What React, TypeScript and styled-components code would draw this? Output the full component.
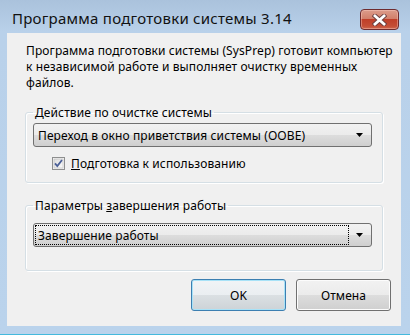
import styled, { createGlobalStyle } from 'styled-components';

const GlobalStyle = createGlobalStyle`
  html, body {
    margin: 0;
    padding: 0;
    background: #b9d1ea;
  }
  body {
    font-family: 'Noto Sans', 'Liberation Sans', sans-serif;
    color: #000;
  }
`;

const Window = styled.div`
  width: 410px;
  height: 335px;
  box-sizing: border-box;
  display: flex;
  flex-direction: column;
  padding: 0 9px 8px 7px;
  background: linear-gradient(#aac2dc 0, #b9d1ea 32px, #bad3ec 100%);
  border-bottom: 1px solid #43b9dd;
`;

const TitleBar = styled.div`
  height: 33px;
  display: flex;
  align-items: flex-start;
  justify-content: space-between;
  padding: 0 2px 0 5px;
`;

const Title = styled.div`
  padding-top: 8px;
  font-size: 15px;
  line-height: 20px;
  letter-spacing: 0.25px;
  color: #111;
  white-space: nowrap;
`;

const CloseButton = styled.div`
  margin-top: 9px;
  width: 37px;
  height: 19px;
  border: 1px solid #6e2c2f;
  border-radius: 4px;
  display: flex;
  align-items: center;
  justify-content: center;
  background: linear-gradient(#dc9c8b 0%, #d2806b 45%, #c03f29 50%, #c44e36 85%, #cf6a50 100%);
  box-shadow: inset 0 0 0 1px rgba(255, 210, 200, 0.4);
`;

const Client = styled.div`
  flex: 1;
  display: flex;
  flex-direction: column;
  background: #f0f0f0;
  padding: 10px 10px 15px 18px;
  letter-spacing: 0.1px;
`;

const Intro = styled.p`
  margin: 0;
  padding-left: 1px;
  font-size: 12px;
  line-height: 16px;
  white-space: nowrap;
`;

const Group = styled.fieldset<{ $top: number; $bottom: number }>`
  margin: ${(p) => p.$top}px 8px 0 0;
  padding: 0 10px ${(p) => p.$bottom}px 7px;
  border: 1px solid #d5dfe5;
  border-radius: 3px;
  box-shadow: 1px 1px 0 #fff, inset 1px 1px 0 #fff;
  min-width: 0;
`;

const Legend = styled.legend`
  padding: 0 2px;
  font-size: 12px;
  line-height: 15px;
  white-space: nowrap;
`;

const Combo = styled.div<{ $top: number }>`
  margin-top: ${(p) => p.$top}px;
  height: 24px;
  box-sizing: border-box;
  border: 1px solid #707070;
  border-radius: 3px;
  display: flex;
  align-items: stretch;
  background: linear-gradient(#f2f2f2 0%, #ebebeb 50%, #dddddd 50%, #cfcfcf 100%);
`;

const ComboValue = styled.div<{ $focused?: boolean }>`
  flex: 1;
  margin: 1px 0 1px 1px;
  padding-left: 2px;
  border: 1px dotted ${(p) => (p.$focused ? '#000' : 'transparent')};
  display: flex;
  align-items: center;
  font-size: 12px;
  white-space: nowrap;
`;

const ComboArrow = styled.div`
  width: 22px;
  display: flex;
  align-items: center;
  justify-content: center;
`;

const CheckRow = styled.label`
  margin: 8px 0 0 19px;
  height: 17px;
  display: flex;
  align-items: center;
  gap: 6px;
  font-size: 12px;
`;

const ButtonRow = styled.div`
  margin-top: 8px;
  display: flex;
  justify-content: flex-end;
  gap: 10px;
`;

const Button = styled.div<{ $default?: boolean }>`
  width: 95px;
  height: 32px;
  box-sizing: border-box;
  border: 1px solid ${(p) => (p.$default ? '#3c7fb1' : '#707070')};
  border-radius: 3px;
  display: flex;
  align-items: center;
  justify-content: center;
  font-size: 12px;
  background: ${(p) =>
    p.$default
      ? 'linear-gradient(#f1f4f6 0%, #eaeef1 50%, #dbe0e3 50%, #cdd3d7 100%)'
      : 'linear-gradient(#f2f2f2 0%, #ebebeb 50%, #dddddd 50%, #cfcfcf 100%)'};
  box-shadow: ${(p) =>
    p.$default ? 'inset 0 0 0 1px #a8e2f7' : 'inset 0 0 0 1px #fcfcfc'};
`;

const Arrow = () => (
  <svg width="8" height="4" viewBox="0 0 8 4">
    <path d="M0 0 H7 L3.5 4 Z" fill="#000" />
  </svg>
);

const CloseGlyph = () => (
  <svg width="15" height="12" viewBox="0 0 15 12">
    <path d="M3 2 L12 10 M12 2 L3 10" stroke="#6b4040" strokeWidth="4.6" strokeLinecap="square" />
    <path d="M3 2 L12 10 M12 2 L3 10" stroke="#fff" strokeWidth="2.8" strokeLinecap="square" />
  </svg>
);

const CheckBox = () => (
  <svg width="13" height="13" viewBox="0 0 13 13">
    <defs>
      <linearGradient id="cbFill" x1="0" y1="0" x2="1" y2="1">
        <stop offset="0" stopColor="#dcdcdc" />
        <stop offset="1" stopColor="#fbfbfb" />
      </linearGradient>
    </defs>
    <rect x="0.5" y="0.5" width="12" height="12" fill="#f4f4f4" stroke="#8e8f8f" />
    <rect x="2" y="2" width="9" height="9" fill="url(#cbFill)" stroke="#bdbdbd" strokeWidth="0.6" />
    <path d="M3 6.3 L5.3 9 L10 3" fill="none" stroke="#4a5f97" strokeWidth="1.8" />
  </svg>
);

export default function App() {
  return (
    <>
      <GlobalStyle />
      <Window>
        <TitleBar>
          <Title>Программа подготовки системы 3.14</Title>
          <CloseButton>
            <CloseGlyph />
          </CloseButton>
        </TitleBar>
        <Client>
          <Intro>
            Программа подготовки системы (SysPrep) готовит компьютер
            <br />к независимой работе и выполняет очистку временных
            <br />файлов.
          </Intro>
          <Group $top={14} $bottom={10}>
            <Legend>
              <u>Д</u>ействие по очистке системы
            </Legend>
            <Combo $top={3}>
              <ComboValue>Переход в окно приветствия системы (OOBE)</ComboValue>
              <ComboArrow>
                <Arrow />
              </ComboArrow>
            </Combo>
            <CheckRow>
              <CheckBox />
              <span>
                <u>П</u>одготовка к использованию
              </span>
            </CheckRow>
          </Group>
          <Group $top={15} $bottom={23}>
            <Legend>
              Параметры <u>з</u>авершения работы
            </Legend>
            <Combo $top={10}>
              <ComboValue $focused>Завершение работы</ComboValue>
              <ComboArrow>
                <Arrow />
              </ComboArrow>
            </Combo>
          </Group>
          <ButtonRow>
            <Button $default>OK</Button>
            <Button>Отмена</Button>
          </ButtonRow>
        </Client>
      </Window>
    </>
  );
}
